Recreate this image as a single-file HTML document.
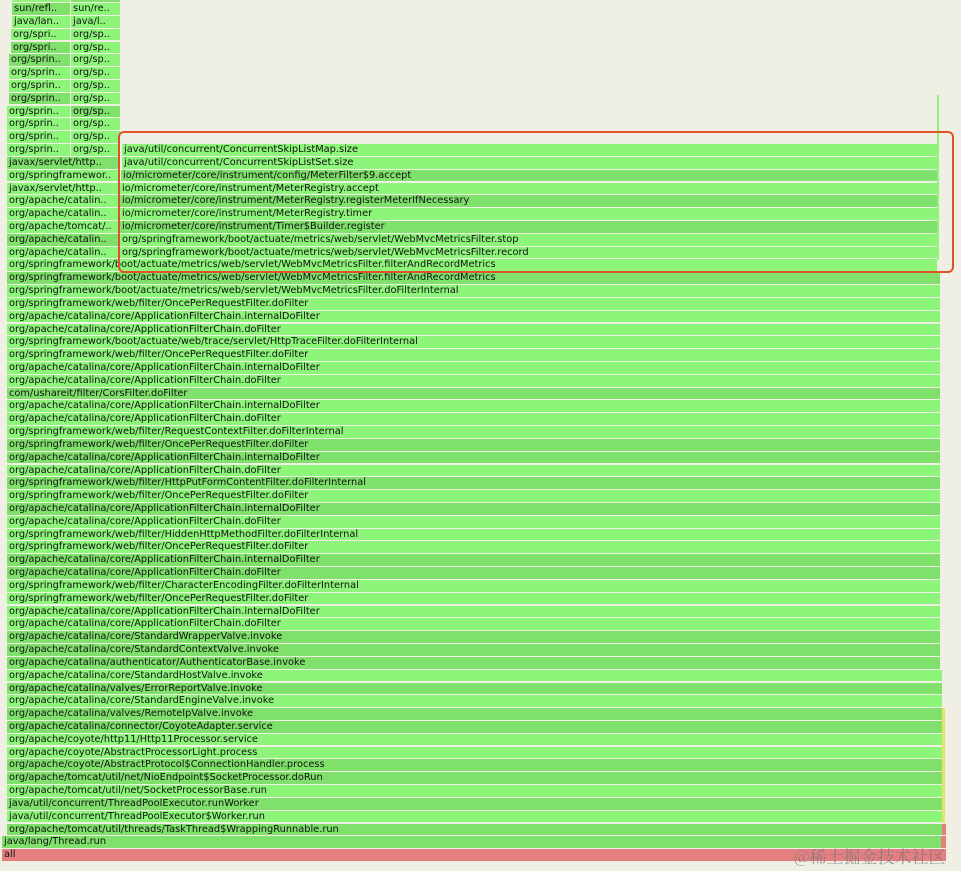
<!DOCTYPE html>
<html><head><meta charset="utf-8">
<style>
html,body{margin:0;padding:0;}
body{width:961px;height:871px;background:#f0efe3;position:relative;overflow:hidden;font-family:"DejaVu Sans","Liberation Sans",sans-serif;}
.f{position:absolute;height:11.8px;line-height:11.8px;font-size:9.8px;color:#111;white-space:nowrap;overflow:hidden;padding-left:2px;box-sizing:border-box;background:#8ef57b;}
.d{background:#7fe06b;}
.r{background:#e57f7f;}
.y{background:#e3e36a;}
#box{position:absolute;left:118px;top:131px;width:836px;height:142px;border:2.5px solid #e0522a;border-radius:6px;box-sizing:border-box;}
#wm{position:absolute;left:794px;top:843px;font-family:"Noto Serif CJK SC","Liberation Serif",serif;font-size:17px;color:rgba(120,120,120,0.75);white-space:nowrap;}
</style></head><body>
<div class="f" style="top:-9.8px;left:12px;width:58px"></div>
<div class="f d" style="top:-9.8px;left:71px;width:49px"></div>
<div class="f d" style="top:3px;left:12px;width:58px">sun/refl..</div>
<div class="f" style="top:3px;left:71px;width:49px">sun/re..</div>
<div class="f" style="top:15.8px;left:12px;width:58px">java/lan..</div>
<div class="f" style="top:15.8px;left:71px;width:49px">java/l..</div>
<div class="f" style="top:28.6px;left:11px;width:59px">org/spri..</div>
<div class="f" style="top:28.6px;left:71px;width:49px">org/sp..</div>
<div class="f d" style="top:41.5px;left:11px;width:59px">org/spri..</div>
<div class="f" style="top:41.5px;left:71px;width:49px">org/sp..</div>
<div class="f d" style="top:54.3px;left:9px;width:61px">org/sprin..</div>
<div class="f" style="top:54.3px;left:71px;width:49px">org/sp..</div>
<div class="f" style="top:67.1px;left:9px;width:61px">org/sprin..</div>
<div class="f" style="top:67.1px;left:71px;width:49px">org/sp..</div>
<div class="f" style="top:79.9px;left:9px;width:61px">org/sprin..</div>
<div class="f" style="top:79.9px;left:71px;width:49px">org/sp..</div>
<div class="f d" style="top:92.7px;left:9px;width:61px">org/sprin..</div>
<div class="f" style="top:92.7px;left:71px;width:49px">org/sp..</div>
<div class="f" style="top:105.6px;left:7px;width:63px">org/sprin..</div>
<div class="f d" style="top:105.6px;left:71px;width:49px">org/sp..</div>
<div class="f" style="top:118.4px;left:7px;width:63px">org/sprin..</div>
<div class="f" style="top:118.4px;left:71px;width:49px">org/sp..</div>
<div class="f" style="top:131.2px;left:7px;width:63px">org/sprin..</div>
<div class="f" style="top:131.2px;left:71px;width:49px">org/sp..</div>
<div class="f" style="top:144px;left:7px;width:63px">org/sprin..</div>
<div class="f" style="top:144px;left:71px;width:49px">org/sp..</div>
<div class="f d" style="top:156.8px;left:7px;width:113px">javax/servlet/http..</div>
<div class="f" style="top:169.7px;left:7px;width:113px">org/springframewor..</div>
<div class="f" style="top:182.5px;left:7px;width:113px">javax/servlet/http..</div>
<div class="f" style="top:195.3px;left:7px;width:113px">org/apache/catalin..</div>
<div class="f" style="top:208.1px;left:7px;width:113px">org/apache/catalin..</div>
<div class="f" style="top:220.9px;left:7px;width:113px">org/apache/tomcat/..</div>
<div class="f d" style="top:233.8px;left:7px;width:113px">org/apache/catalin..</div>
<div class="f" style="top:246.6px;left:7px;width:113px">org/apache/catalin..</div>
<div class="f" style="top:144px;left:122px;width:815px">java/util/concurrent/ConcurrentSkipListMap.size</div>
<div class="f" style="top:156.8px;left:122px;width:815px">java/util/concurrent/ConcurrentSkipListSet.size</div>
<div class="f d" style="top:169.7px;left:121px;width:816px">io/micrometer/core/instrument/config/MeterFilter$9.accept</div>
<div class="f" style="top:182.5px;left:120px;width:817px">io/micrometer/core/instrument/MeterRegistry.accept</div>
<div class="f d" style="top:195.3px;left:120px;width:817px">io/micrometer/core/instrument/MeterRegistry.registerMeterIfNecessary</div>
<div class="f" style="top:208.1px;left:120px;width:817px">io/micrometer/core/instrument/MeterRegistry.timer</div>
<div class="f d" style="top:220.9px;left:120px;width:817px">io/micrometer/core/instrument/Timer$Builder.register</div>
<div class="f" style="top:233.8px;left:120px;width:817px">org/springframework/boot/actuate/metrics/web/servlet/WebMvcMetricsFilter.stop</div>
<div class="f" style="top:246.6px;left:120px;width:817px">org/springframework/boot/actuate/metrics/web/servlet/WebMvcMetricsFilter.record</div>
<div class="f" style="top:259.4px;left:7px;width:930px">org/springframework/boot/actuate/metrics/web/servlet/WebMvcMetricsFilter.filterAndRecordMetrics</div>
<div class="f" style="top:95px;left:937px;width:2px;height:165px;padding:0"></div>
<div class="f d" style="top:272.2px;left:7px;width:933px">org/springframework/boot/actuate/metrics/web/servlet/WebMvcMetricsFilter.filterAndRecordMetrics</div>
<div class="f" style="top:285px;left:7px;width:933px">org/springframework/boot/actuate/metrics/web/servlet/WebMvcMetricsFilter.doFilterInternal</div>
<div class="f" style="top:297.9px;left:7px;width:933px">org/springframework/web/filter/OncePerRequestFilter.doFilter</div>
<div class="f" style="top:310.7px;left:7px;width:933px">org/apache/catalina/core/ApplicationFilterChain.internalDoFilter</div>
<div class="f" style="top:323.5px;left:7px;width:933px">org/apache/catalina/core/ApplicationFilterChain.doFilter</div>
<div class="f" style="top:336.3px;left:7px;width:933px">org/springframework/boot/actuate/web/trace/servlet/HttpTraceFilter.doFilterInternal</div>
<div class="f" style="top:349.1px;left:7px;width:933px">org/springframework/web/filter/OncePerRequestFilter.doFilter</div>
<div class="f" style="top:362px;left:7px;width:933px">org/apache/catalina/core/ApplicationFilterChain.internalDoFilter</div>
<div class="f" style="top:374.8px;left:7px;width:933px">org/apache/catalina/core/ApplicationFilterChain.doFilter</div>
<div class="f d" style="top:387.6px;left:7px;width:933px">com/ushareit/filter/CorsFilter.doFilter</div>
<div class="f" style="top:400.4px;left:7px;width:933px">org/apache/catalina/core/ApplicationFilterChain.internalDoFilter</div>
<div class="f" style="top:413.2px;left:7px;width:933px">org/apache/catalina/core/ApplicationFilterChain.doFilter</div>
<div class="f" style="top:426.1px;left:7px;width:933px">org/springframework/web/filter/RequestContextFilter.doFilterInternal</div>
<div class="f d" style="top:438.9px;left:7px;width:933px">org/springframework/web/filter/OncePerRequestFilter.doFilter</div>
<div class="f d" style="top:451.7px;left:7px;width:933px">org/apache/catalina/core/ApplicationFilterChain.internalDoFilter</div>
<div class="f" style="top:464.5px;left:7px;width:933px">org/apache/catalina/core/ApplicationFilterChain.doFilter</div>
<div class="f d" style="top:477.3px;left:7px;width:933px">org/springframework/web/filter/HttpPutFormContentFilter.doFilterInternal</div>
<div class="f" style="top:490.2px;left:7px;width:933px">org/springframework/web/filter/OncePerRequestFilter.doFilter</div>
<div class="f d" style="top:503px;left:7px;width:933px">org/apache/catalina/core/ApplicationFilterChain.internalDoFilter</div>
<div class="f" style="top:515.8px;left:7px;width:933px">org/apache/catalina/core/ApplicationFilterChain.doFilter</div>
<div class="f" style="top:528.6px;left:7px;width:933px">org/springframework/web/filter/HiddenHttpMethodFilter.doFilterInternal</div>
<div class="f" style="top:541.4px;left:7px;width:933px">org/springframework/web/filter/OncePerRequestFilter.doFilter</div>
<div class="f d" style="top:554.3px;left:7px;width:933px">org/apache/catalina/core/ApplicationFilterChain.internalDoFilter</div>
<div class="f d" style="top:567.1px;left:7px;width:933px">org/apache/catalina/core/ApplicationFilterChain.doFilter</div>
<div class="f" style="top:579.9px;left:7px;width:933px">org/springframework/web/filter/CharacterEncodingFilter.doFilterInternal</div>
<div class="f" style="top:592.7px;left:7px;width:933px">org/springframework/web/filter/OncePerRequestFilter.doFilter</div>
<div class="f" style="top:605.5px;left:7px;width:933px">org/apache/catalina/core/ApplicationFilterChain.internalDoFilter</div>
<div class="f" style="top:618.4px;left:7px;width:933px">org/apache/catalina/core/ApplicationFilterChain.doFilter</div>
<div class="f d" style="top:631.2px;left:7px;width:933px">org/apache/catalina/core/StandardWrapperValve.invoke</div>
<div class="f d" style="top:644px;left:7px;width:933px">org/apache/catalina/core/StandardContextValve.invoke</div>
<div class="f d" style="top:656.8px;left:7px;width:933px">org/apache/catalina/authenticator/AuthenticatorBase.invoke</div>
<div class="f" style="top:669.6px;left:7px;width:935px">org/apache/catalina/core/StandardHostValve.invoke</div>
<div class="f d" style="top:682.5px;left:7px;width:935px">org/apache/catalina/valves/ErrorReportValve.invoke</div>
<div class="f" style="top:695.3px;left:7px;width:935px">org/apache/catalina/core/StandardEngineValve.invoke</div>
<div class="f d" style="top:708.1px;left:7px;width:935px">org/apache/catalina/valves/RemoteIpValve.invoke</div>
<div class="f d" style="top:720.9px;left:7px;width:935px">org/apache/catalina/connector/CoyoteAdapter.service</div>
<div class="f" style="top:733.7px;left:7px;width:935px">org/apache/coyote/http11/Http11Processor.service</div>
<div class="f" style="top:746.6px;left:7px;width:935px">org/apache/coyote/AbstractProcessorLight.process</div>
<div class="f d" style="top:759.4px;left:7px;width:935px">org/apache/coyote/AbstractProtocol$ConnectionHandler.process</div>
<div class="f d" style="top:772.2px;left:7px;width:935px">org/apache/tomcat/util/net/NioEndpoint$SocketProcessor.doRun</div>
<div class="f" style="top:785px;left:7px;width:935px">org/apache/tomcat/util/net/SocketProcessorBase.run</div>
<div class="f d" style="top:797.8px;left:7px;width:935px">java/util/concurrent/ThreadPoolExecutor.runWorker</div>
<div class="f" style="top:810.7px;left:7px;width:935px">java/util/concurrent/ThreadPoolExecutor$Worker.run</div>
<div class="f d" style="top:823.5px;left:7px;width:935px">org/apache/tomcat/util/threads/TaskThread$WrappingRunnable.run</div>
<div class="f d" style="top:836.3px;left:2px;width:939px">java/lang/Thread.run</div>
<div class="f r" style="top:836.3px;left:941px;width:5px;padding:0"></div>
<div class="f r" style="top:849.1px;left:2px;width:944px">all</div>
<div class="f y" style="top:708px;left:942px;width:3px;height:115px;padding:0"></div>
<div class="f r" style="top:823.5px;left:942px;width:4px;padding:0"></div>
<div id="box"></div>
<div id="wm">@稀土掘金技术社区</div>
</body></html>
